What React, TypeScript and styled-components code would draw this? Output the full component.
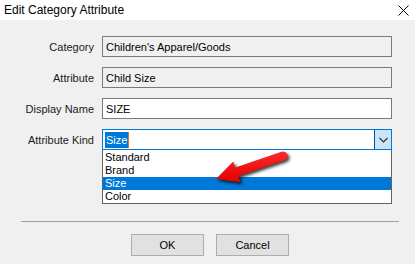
import React from 'react';
import styled, { createGlobalStyle } from 'styled-components';

const GlobalStyle = createGlobalStyle`
  html, body {
    margin: 0;
    padding: 0;
    background: #f0f0f0;
  }
  body {
    font-family: "Liberation Sans", Arial, sans-serif;
    font-size: 11px;
    color: #000;
  }
`;

const Dialog = styled.div`
  width: 415px;
  height: 264px;
  background: #f0f0f0;
  overflow: hidden;
`;

const TitleBar = styled.div`
  height: 20px;
  background: #fff;
  display: flex;
  align-items: center;
  justify-content: space-between;
  padding: 0 6px 0 4px;
  font-size: 12px;
  line-height: 1;
`;

const Form = styled.div`
  display: grid;
  grid-template-columns: 94px 290px;
  column-gap: 8px;
  row-gap: 10px;
  padding-top: 16px;
`;

const Label = styled.div`
  height: 21px;
  display: flex;
  align-items: center;
  justify-content: flex-end;
  color: #1a1a1a;
`;

const Field = styled.div<{ $readOnly?: boolean }>`
  height: 21px;
  box-sizing: border-box;
  border: 1px solid #7a7a7a;
  background: ${(p) => (p.$readOnly ? '#f0f0f0' : '#fff')};
  display: flex;
  align-items: center;
  padding-left: 3px;
  white-space: nowrap;
`;

const ComboWrap = styled.div`
  position: relative;
`;

const Combo = styled.div`
  height: 21px;
  box-sizing: border-box;
  border: 1px solid #0078d7;
  background: #fff;
  display: flex;
  align-items: stretch;
`;

const ComboText = styled.div`
  flex: 1;
  display: flex;
  align-items: center;
  padding-left: 2px;
`;

const Selected = styled.span`
  background: #0078d7;
  color: #fff;
  padding: 0 1px;
  line-height: 16px;
  border-right: 1px solid #e0742a;
`;

const DropButton = styled.div`
  width: 16px;
  background: #cce4f7;
  border-left: 1px solid #005499;
  display: flex;
  align-items: center;
  justify-content: center;
`;

const List = styled.div`
  position: absolute;
  left: 0;
  top: 21px;
  width: 290px;
  box-sizing: border-box;
  border: 1px solid #646464;
  border-top: none;
  background: #fff;
  padding-top: 1px;
`;

const Item = styled.div<{ $active?: boolean }>`
  height: 13px;
  line-height: 13px;
  padding-left: 2px;
  background: ${(p) => (p.$active ? '#0078d7' : 'transparent')};
  color: ${(p) => (p.$active ? '#fff' : '#000')};
`;

const Arrow = styled.svg`
  position: absolute;
  left: 103px;
  top: -4px;
  overflow: visible;
  filter: drop-shadow(2px 2px 1.5px rgba(0, 0, 0, 0.75));
`;

const Separator = styled.div`
  margin: 71px 16px 0 21px;
  height: 1px;
  background: #a0a0a0;
`;

const Buttons = styled.div`
  display: flex;
  gap: 12px;
  padding-left: 131px;
  margin-top: 12px;
`;

const Button = styled.div`
  width: 73px;
  height: 22px;
  box-sizing: border-box;
  background: #e1e1e1;
  border: 1px solid #adadad;
  display: flex;
  align-items: center;
  justify-content: center;
`;

const kinds = ['Standard', 'Brand', 'Size', 'Color'];

export default function App() {
  return (
    <Dialog>
      <GlobalStyle />
      <TitleBar>
        <span>Edit Category Attribute</span>
        <svg width="11" height="11" viewBox="0 0 11 11">
          <path d="M0.5 0.5 L10.5 10.5 M10.5 0.5 L0.5 10.5" stroke="#000" strokeWidth="1" />
        </svg>
      </TitleBar>
      <Form>
        <Label>Category</Label>
        <Field $readOnly>Children's Apparel/Goods</Field>
        <Label>Attribute</Label>
        <Field $readOnly>Child Size</Field>
        <Label>Display Name</Label>
        <Field>SIZE</Field>
        <Label>Attribute Kind</Label>
        <ComboWrap>
          <Combo>
            <ComboText>
              <Selected>Size</Selected>
            </ComboText>
            <DropButton>
              <svg width="9" height="6" viewBox="0 0 9 6">
                <path d="M0.5 1 L4.5 5 L8.5 1" stroke="#333" strokeWidth="1.2" fill="none" />
              </svg>
            </DropButton>
          </Combo>
          <List>
            {kinds.map((k) => (
              <Item key={k} $active={k === 'Size'}>
                {k}
              </Item>
            ))}
            <Arrow width="90" height="45" viewBox="0 0 90 45">
              <defs>
                <linearGradient id="red" x1="0" y1="0" x2="0" y2="1">
                  <stop offset="0" stopColor="#ff2a2a" />
                  <stop offset="1" stopColor="#e00000" />
                </linearGradient>
              </defs>
              <path
                d="M10 33 L27.2 15.4 L29.3 21.6 L75.5 5.7 A4.5 4.5 0 0 1 78.5 14.3 L32.3 30.1 L34.4 36.3 Z"
                fill="url(#red)"
              />
            </Arrow>
          </List>
        </ComboWrap>
      </Form>
      <Separator />
      <Buttons>
        <Button>OK</Button>
        <Button>Cancel</Button>
      </Buttons>
    </Dialog>
  );
}
